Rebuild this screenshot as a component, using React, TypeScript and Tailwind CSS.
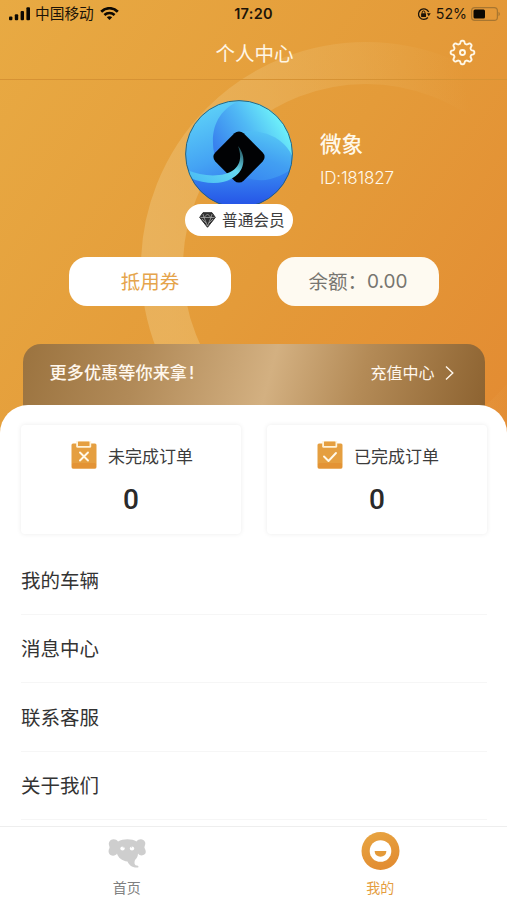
import type { ReactNode } from 'react'

const menuItems = ['我的车辆', '消息中心', '联系客服', '关于我们']

function StatusBar() {
  return (
    <div className="grid h-[27px] grid-cols-3 items-center pl-[9px] pr-[7px] text-[#1c1408]">
      <div className="flex items-center">
        <svg width="22" height="14" viewBox="0 0 22 14" fill="#0d0903">
          <rect x="0" y="9.5" width="3.4" height="3.8" rx="1" />
          <rect x="5.8" y="7.3" width="3.4" height="6" rx="1" />
          <rect x="11.6" y="4" width="3.4" height="9.3" rx="1" />
          <rect x="17.4" y="0.3" width="3.6" height="13" rx="1" />
        </svg>
        <span className="ml-[4px] pt-px text-[14.7px] leading-5">中国移动</span>
        <svg className="ml-[6px]" width="19" height="14" viewBox="0 0 19 14" fill="none" stroke="#0d0903">
          <path d="M1.2 4.7C5.8.1 13.2.1 17.8 4.7" strokeWidth="2.7" />
          <path d="M4.4 8C7.300 5.200 11.7 5.200 14.6 8" strokeWidth="2.5" />
          <path d="M9.5 13L6.800 10.300C8.300 9 10.700 9 12.200 10.300Z" fill="#0d0903" stroke="none" />
        </svg>
      </div>
      <div className="ml-[-2px] text-center text-[14.5px] font-semibold leading-5 tracking-[0.3px]">17:20</div>
      <div className="flex items-center justify-end">
        <svg width="14" height="14" viewBox="0 0 14 14" fill="none" stroke="#1c1408" strokeWidth="1.3">
          <path d="M10.9 10.5A5.3 5.3 0 1 1 11.7 5" />
          <path d="M9.900 6.300h3.800l-1.900 3z" fill="#1c1408" stroke="none" />
          <rect x="4.100" y="6.200" width="4.9" height="3.8" fill="#1c1408" stroke="none" rx="0.5" />
          <path d="M5.200 6.400V5.300a1.350 1.350 0 0 1 2.700 0v1.100" strokeWidth="1" />
        </svg>
        <span className="ml-[5px] text-[14.2px] leading-5">52%</span>
        <svg className="ml-[4px]" width="29" height="14" viewBox="0 0 29 14">
          <rect x="0.6" y="0.6" width="25.8" height="12.8" rx="3.2" fill="none" stroke="#a87630" strokeWidth="1.2" />
          <rect x="2.5" y="2.5" width="11.5" height="9" rx="1.5" fill="#0d0903" />
          <path d="M27.500 4.800c1.800.8 1.800 3.600 0 4.400z" fill="#a87630" />
        </svg>
      </div>
    </div>
  )
}

// Eight rounded teeth around a small hub
function GearIcon() {
  const points: string[] = []
  for (let i = 0; i <= 144; i++) {
    const a = (i / 144) * Math.PI * 2
    const r = 10.4 + 1.500 * Math.tanh(1.800 * Math.cos(8 * a))
    points.push(`${(13.5 + r * Math.sin(a)).toFixed(2)},${(13.5 - r * Math.cos(a)).toFixed(2)}`)
  }
  return (
    <svg className="mb-[2px]" width="27" height="27" viewBox="0 0 27 27" fill="none" stroke="#fff8e8" strokeWidth="1.900" strokeLinejoin="round">
      <polygon points={points.join(' ')} />
      <circle cx="13.5" cy="13.5" r="2.5" />
    </svg>
  )
}

function Ring() {
  return (
    <svg className="absolute inset-0" width="507" height="435" viewBox="0 0 507 435" fill="none">
      <defs>
        <linearGradient id="ring" gradientUnits="userSpaceOnUse" x1="150" y1="220" x2="480" y2="160">
          <stop offset="0" stopColor="#ebb968" stopOpacity="0.7" />
          <stop offset="0.4" stopColor="#ebb968" stopOpacity="0.5" />
          <stop offset="0.700" stopColor="#ebb968" stopOpacity="0.280" />
          <stop offset="1" stopColor="#ebb968" stopOpacity="0" />
        </linearGradient>
      </defs>
      <circle cx="366" cy="267" r="204" stroke="url(#ring)" strokeWidth="42" />
    </svg>
  )
}

function Avatar() {
  return (
    <svg width="108" height="108" viewBox="0 0 108 108">
      <defs>
        <clipPath id="avatar-clip">
          <circle cx="54" cy="54" r="53.5" />
        </clipPath>
        <linearGradient id="base" x1="0.2" y1="0" x2="0.6" y2="1">
          <stop offset="0" stopColor="#60d6f8" />
          <stop offset="0.5" stopColor="#44a3f4" />
          <stop offset="1" stopColor="#285ee8" />
        </linearGradient>
        <linearGradient id="petal" x1="0.9" y1="0.2" x2="0.05" y2="0.7">
          <stop offset="0" stopColor="#74fcfa" />
          <stop offset="0.5" stopColor="#50b9f5" />
          <stop offset="1" stopColor="#3880ee" />
        </linearGradient>
        <linearGradient id="lobe" x1="0.8" y1="0" x2="0.4" y2="1">
          <stop offset="0" stopColor="#58cdf6" />
          <stop offset="0.6" stopColor="#429ff2" />
          <stop offset="1" stopColor="#3a8cf1" />
        </linearGradient>
        <linearGradient id="floor" x1="0" y1="0" x2="0" y2="1">
          <stop offset="0" stopColor="#398df2" />
          <stop offset="1" stopColor="#2450e6" />
        </linearGradient>
        <linearGradient id="swoosh" x1="0" y1="1" x2="1" y2="0">
          <stop offset="0" stopColor="#45b7f5" />
          <stop offset="0.6" stopColor="#66d9f2" />
          <stop offset="1" stopColor="#1d464d" />
        </linearGradient>
      </defs>
      <g clipPath="url(#avatar-clip)">
        <rect width="108" height="108" fill="url(#base)" />
        <path d="M56 0C36 8 27 24 28 44C28 56 34 65 44 73L108 66V0Z" fill="url(#petal)" />
        <path d="M54 32C78 28 100 38 108 58V74C92 84 72 82 57 76Z" fill="url(#lobe)" />
        <path d="M0 74C15 83 35 86 52 78C72 84 92 80 108 68V108H0Z" fill="url(#floor)" />
        <rect x="34" y="37" width="40" height="40" rx="6.5" fill="#010204" transform="rotate(45 54 57)" />
        <path d="M53 46C59 61 52 71 40 74C28 77 14 75 2 70L5 78C20 84 35 85 46 79C60 72 62 57 53 46Z" fill="url(#swoosh)" />
      </g>
      <circle cx="54" cy="54" r="53.4" fill="none" stroke="#245a72" strokeWidth="0.9" />
    </svg>
  )
}

function DiamondIcon() {
  return (
    <svg width="17" height="16" viewBox="0 0 17 16">
      <path d="M4 .7h9l3.300 4.700L8.500 15.300.7 5.400z" fill="#303030" stroke="#303030" strokeLinejoin="round" />
      <path d="M1.500 5.500h14M5 5.500l3.500 8.500L12 5.500 8.500 2 5 5.500 4 2M12 5.500l1-3.500M3 7l4 4M14 7l-4 4" fill="none" stroke="#b5b5b5" strokeWidth="0.7" />
    </svg>
  )
}

function ClipboardIcon({ children }: { children: ReactNode }) {
  return (
    <svg width="26" height="28" viewBox="0 0 26 28" fill="none">
      <rect x="0.5" y="2.5" width="25" height="25" rx="1.500" fill="#e59f40" />
      <rect x="1" y="22" width="24" height="5.5" rx="1.500" fill="#e39335" />
      <rect x="5.200" y="-1" width="15" height="7.800" rx="1.500" fill="#fff3d9" />
      <rect x="7" y="0.5" width="11.5" height="4.5" rx="0.5" fill="#e59f40" />
      <g stroke="#fff8e8" strokeWidth="1.900" strokeLinecap="round" strokeLinejoin="round">{children}</g>
    </svg>
  )
}

function OrderCard({ label, icon }: { label: string; icon: ReactNode }) {
  return (
    <div className="h-[109px] w-[220px] rounded-[4px] bg-white pt-[16px] shadow-[0_0_5px_rgba(0,0,0,0.08)]">
      <div className="flex h-[28px] items-center justify-center pl-[2px]">
        {icon}
        <span className="ml-[11px] mt-[4px] text-[17px] leading-6 text-[#3c3c3c]">{label}</span>
      </div>
      <div className="mt-[15px] text-center font-['Roboto',sans-serif] text-[28px] font-medium leading-8 text-[#2a2a2a]">0</div>
    </div>
  )
}

function TabBar() {
  return (
    <nav className="relative grid h-[74px] grid-cols-2 border-t border-[#eeeeee] bg-white text-[14px] leading-5">
      <div className="flex flex-col items-center pt-[11px] text-[#808080]">
        <svg width="38" height="32" viewBox="0 0 38 32">
          <path
            d="M10 3.500C8 0 2 .5 1 4.500C.3 7 1.800 8 1.500 10C.2 12 0 15.500 2.500 17C5 18.500 8 17.500 9 15.500C10 19.500 14 23 19.500 23.500C21 27 24 30 30 29.500C31 29 30.500 27.500 28.500 27.500C26.500 27 26 25 27 22C29 20 30 18 30 15.500C31.500 18 35 18 37 16C38.500 14 37.500 11.500 36.500 10C36.200 8 38 6.500 37 4C35.500.3 30.500.5 28.500 3.500C24 .5 15 .5 10 3.500Z"
            fill="#cecece"
          />
          <ellipse cx="14.5" cy="10.5" rx="2.2" ry="1.900" fill="#fff" />
          <ellipse cx="24" cy="10.5" rx="2.2" ry="1.900" fill="#fff" />
          <path d="M14.300 8.400h1.700l-.8 1.500zM22.700 8.400h1.700l-1 1.500z" fill="#cecece" />
        </svg>
        <span className="mt-[8px]">首页</span>
      </div>
      <div className="flex flex-col items-center pt-[5px] text-[#e59e3f]">
        <svg width="39" height="39" viewBox="0 0 39 39">
          <defs>
            <linearGradient id="face" x1="0" y1="0" x2="0.4" y2="1">
              <stop offset="0" stopColor="#e8a642" />
              <stop offset="1" stopColor="#e28d32" />
            </linearGradient>
          </defs>
          <circle cx="19.5" cy="19" r="19" fill="url(#face)" />
          <circle cx="19.5" cy="19" r="10.800" fill="#fff" />
          <path d="M13.700 19h11.600c.3 7.500-11.900 7.500-11.600 0z" fill="#e49a39" />
        </svg>
        <span className="mt-[7px]">我的</span>
      </div>
    </nav>
  )
}

export default function App() {
  return (
    <div className="flex h-[900px] w-[507px] flex-col overflow-hidden bg-white font-['Inter','Noto_Sans_CJK_SC',sans-serif]">
      <section className="relative h-[435px] shrink-0 bg-[linear-gradient(125deg,#e8aa43_0%,#e49b39_55%,#e38b32_100%)]">
        <Ring />
        <div className="relative">
          <StatusBar />
          <header className="grid h-[53px] grid-cols-[1fr_auto_1fr] items-center border-b border-[#d69234] pr-[31px]">
            <h1 className="col-start-2 ml-[33px] pt-px text-[19.5px] leading-6 text-[#fff6e5]">个人中心</h1>
            <div className="flex justify-end">
              <GearIcon />
            </div>
          </header>

          <div className="flex pl-[185px] pt-[20px]">
            <div className="h-[136px] w-[108px]">
              <Avatar />
              <div className="relative -mt-[4px] flex h-[32px] items-center rounded-full bg-white pl-[14px]">
                <DiamondIcon />
                <span className="ml-[6px] pt-[2px] text-[15.7px] leading-6 text-[#3e3e3e]">普通会员</span>
              </div>
            </div>
            <div className="ml-[27px] pt-[30px] text-[#fff8ea]">
              <div className="text-[21.5px] font-medium leading-7">微象</div>
              <div className="mt-[8px] text-[17px] font-light leading-6 tracking-[-0.2px]">ID:181827</div>
            </div>
          </div>

          <div className="mt-[21px] flex justify-between pl-[69px] pr-[68px] text-[19.5px]">
            <div className="flex h-[49px] w-[162px] items-center justify-center rounded-[18px] bg-white pt-[2px] text-[#e5a44c]">
              抵用券
            </div>
            <div className="flex h-[49px] w-[162px] items-center justify-center rounded-[18px] bg-[#fefaf1] pt-[2px] text-[#777570]">
              余额：<span className="text-[19px]">0.00</span>
            </div>
          </div>

          <div className="mx-auto mt-[38px] flex h-[74px] w-[462px] items-start justify-between rounded-t-[18px] bg-[linear-gradient(105deg,#9b733f_0%,#b18a58_25%,#d3b081_53%,#b48b57_72%,#8c6230_100%)] pl-[27px] pr-[31px] pt-[17px] text-[#fff7ed]">
            <span className="text-[17.200px] font-medium leading-6">更多优惠等你来拿<span className="ml-[2px]">!</span></span>
            <span className="flex items-center text-[16px] leading-6">
              充值中心
              <svg className="ml-[10px]" width="9" height="16" viewBox="0 0 9 16" fill="none" stroke="#fff7ed" strokeWidth="1.400">
                <path d="M1 1.500L7.800 8L1 14.500" />
              </svg>
            </span>
          </div>
        </div>
      </section>

      <main className="relative -mt-[30px] flex-1 overflow-hidden rounded-t-[28px] bg-white px-[20px] pt-[20px]">
        <div className="flex justify-between pl-px">
          <OrderCard
            label="未完成订单"
            icon={
              <ClipboardIcon>
                <path d="M9 11.500l8 8M17 11.500l-8 8" />
              </ClipboardIcon>
            }
          />
          <OrderCard
            label="已完成订单"
            icon={
              <ClipboardIcon>
                <path d="M7 15.500l4.500 4.500L19 12" />
              </ClipboardIcon>
            }
          />
        </div>
        <ul className="mt-[12px] pl-px text-[19.5px] text-[#333333]">
          {menuItems.map((item) => (
            <li key={item} className="flex h-[68.5px] items-center border-b border-[#f6f6f6] pt-[3px]">
              {item}
            </li>
          ))}
        </ul>
      </main>
      <TabBar />
    </div>
  )
}
